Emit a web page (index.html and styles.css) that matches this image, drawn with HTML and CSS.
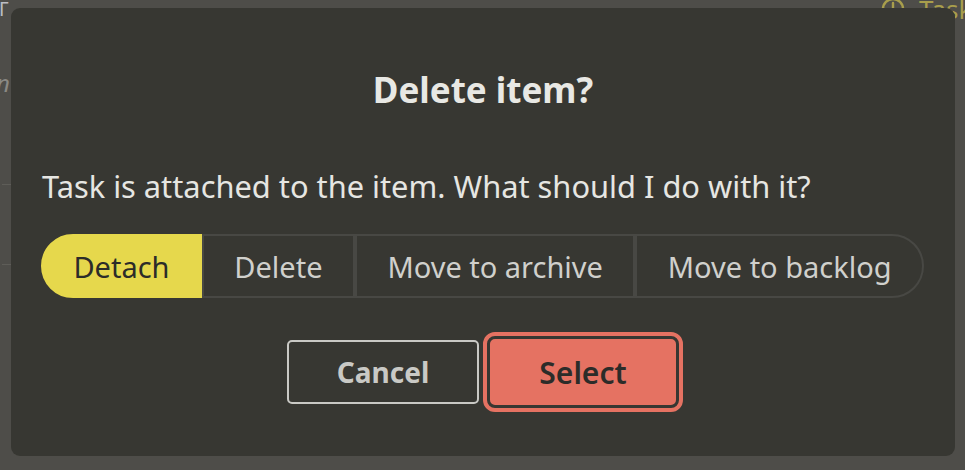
FILE: index.html
```html
<!DOCTYPE html>
<html lang="en">
<head>
<meta charset="utf-8">
<title>Delete item?</title>
<link rel="stylesheet" href="styles.css">
</head>
<body>
<div class="backdrop">
  <span class="bg-glyph">Г</span>
  <span class="bg-italic">n</span>
  <span class="bg-line bg-line-1"></span>
  <span class="bg-line bg-line-2"></span>
  <div class="bg-task">
    <svg class="bg-clock" width="26" height="26" viewBox="0 0 26 26" fill="none" stroke="currentColor" stroke-width="2.4" stroke-linecap="round">
      <circle cx="13" cy="13" r="10"/>
      <path d="M13 7v6l-4 4"/>
    </svg>
    <span>Tasks</span>
  </div>
</div>

<div class="overlay">
  <div class="dialog" role="dialog" aria-labelledby="dlg-title">
    <h1 class="dialog-title" id="dlg-title">Delete item?</h1>
    <p class="dialog-text">Task is attached to the item. What should I do with it?</p>
    <div class="segmented">
      <button class="segment is-active">Detach</button>
      <button class="segment">Delete</button>
      <button class="segment">Move to archive</button>
      <button class="segment">Move to backlog</button>
    </div>
    <div class="actions">
      <button class="btn btn-cancel">Cancel</button>
      <button class="btn btn-select">Select</button>
    </div>
  </div>
</div>
</body>
</html>
```

FILE: styles.css
```css
* { box-sizing: border-box; }

html, body {
  margin: 0;
  height: 100%;
}

body {
  background: #4e4d49;
  font-family: "Noto Sans", "Open Sans", sans-serif;
  overflow: hidden;
  position: relative;
}

/* faint content behind the modal */
.backdrop {
  position: absolute;
  inset: 0;
}
.bg-glyph {
  position: absolute;
  left: -1px;
  top: 0;
  font-size: 19px;
  line-height: 19px;
  color: #bdbdc4;
}
.bg-italic {
  position: absolute;
  left: -4px;
  top: 66px;
  font-size: 24px;
  font-style: italic;
  color: #8a8984;
}
.bg-line {
  position: absolute;
  left: 2px;
  width: 9px;
  height: 1px;
  background: #5e5d58;
}
.bg-line-1 { top: 184px; }
.bg-line-2 { top: 264px; }
.bg-task {
  position: absolute;
  left: 880px;
  top: -4px;
  display: flex;
  align-items: center;
  gap: 13px;
  color: #a89e4c;
  font-size: 26px;
  line-height: 26px;
}
.bg-clock { flex: none; }

/* modal */
.overlay {
  position: absolute;
  inset: 0;
  padding: 8px 10px 14px 11px;
}
.dialog {
  width: 944px;
  height: 448px;
  background: #373732;
  border-radius: 9px;
  padding: 0 31px;
  display: flex;
  flex-direction: column;
}

.dialog-title {
  margin: 59px 0 0;
  text-align: center;
  font-size: 35px;
  line-height: 46px;
  font-weight: 700;
  color: #e8e8e4;
}

.dialog-text {
  margin: 53px 0 0;
  font-size: 30.8px;
  line-height: 40px;
  color: #e6e6e2;
}

.segmented {
  margin: 28px 0 0 -1px;
  height: 64px;
  display: flex;
}
.segment {
  flex: 1 1 auto;
  padding: 0 24px;
  background: transparent;
  border: 2px solid #484844;
  border-left-width: 0;
  font-family: inherit;
  font-size: 29px;
  color: #d0d0cc;
  white-space: nowrap;
}
.segment + .segment { border-left-width: 2px; }
.segment:first-child {
  border-left-width: 2px;
  border-radius: 32px 0 0 32px;
}
.segment:last-child { border-radius: 0 32px 32px 0; }
.segment.is-active {
  background: #e6d84c;
  border-color: #e6d84c;
  color: #2c2c29;
}
.segment.is-active + .segment { border-left-color: #484844; }

.actions {
  margin-top: 38px;
  display: flex;
  justify-content: center;
  align-items: center;
  gap: 8px;
}
.btn {
  width: 192px;
  font-family: inherit;
  font-size: 28px;
  cursor: pointer;
}
.btn-cancel {
  height: 64px;
  background: transparent;
  border: 2px solid #c9c9c5;
  border-radius: 5px;
  color: #c9c9c5;
  font-weight: 700;
}
.btn-select {
  height: 72px;
  background: #e57262;
  border: 3px solid #373732;
  border-radius: 8px;
  outline: 4px solid #e57262;
  color: #2c2c29;
  font-size: 30px;
  font-weight: 600;
}
```
